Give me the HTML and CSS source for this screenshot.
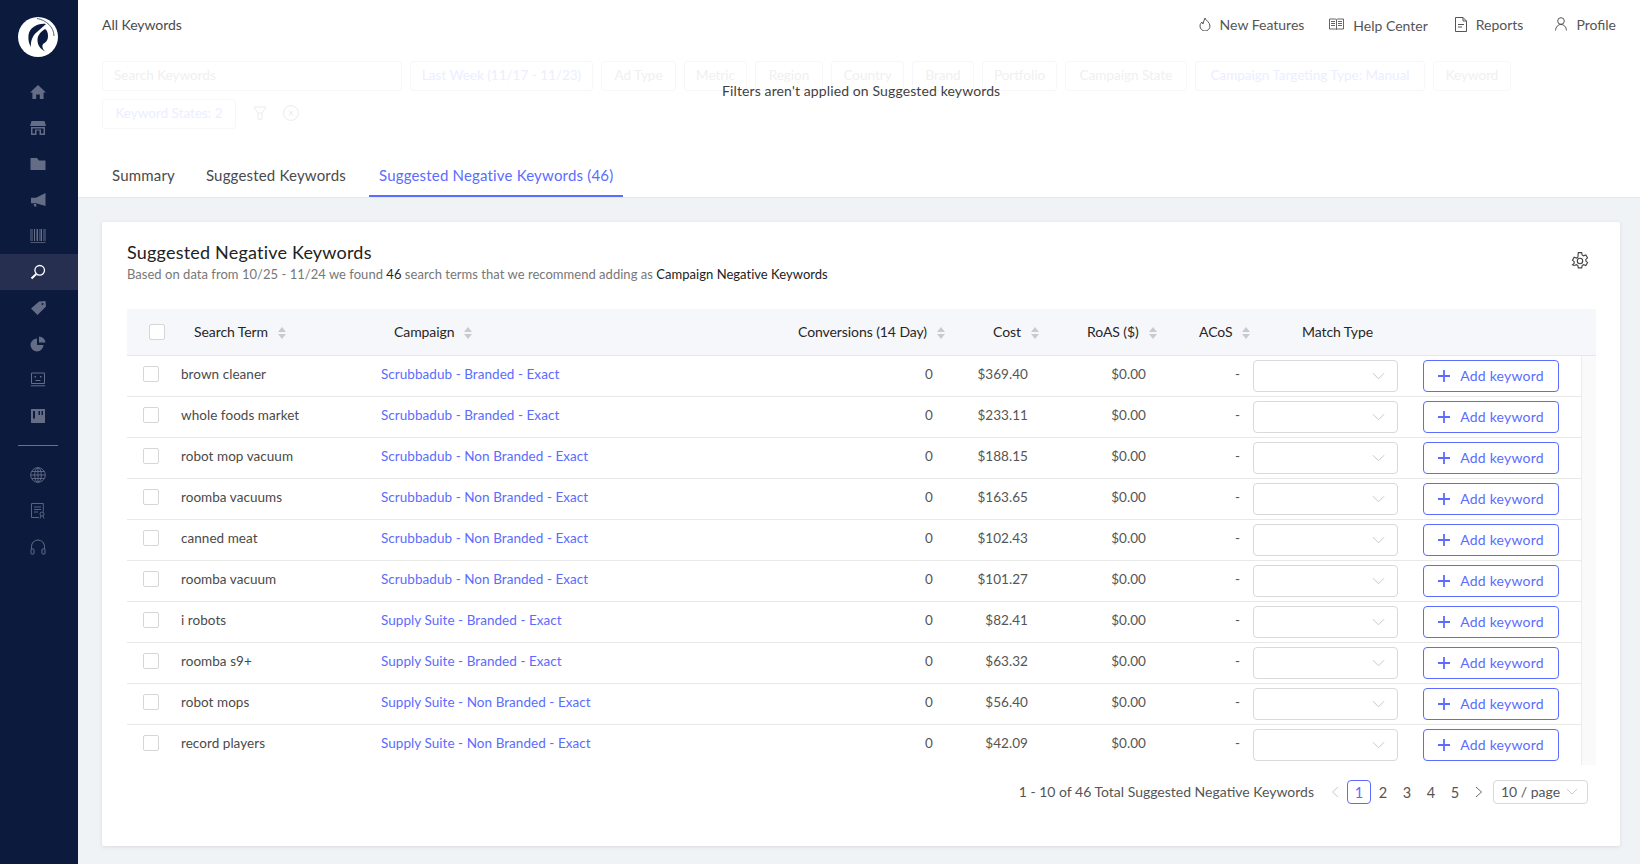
FILE: index.html
```html
<!DOCTYPE html>
<html lang="en">
<head>
<meta charset="utf-8">
<title>All Keywords</title>
<link rel="stylesheet" href="styles.css">
</head>
<body>
<svg class="defs" width="0" height="0">
  <symbol id="chev" viewBox="0 0 14 8"><path d="M1 1l6 6 6-6" fill="none" stroke="currentColor" stroke-width="1"/></symbol>
  <symbol id="plus" viewBox="0 0 12 12"><path d="M6 0v12M0 6h12" fill="none" stroke="currentColor" stroke-width="1.8"/></symbol>
  <symbol id="sort" viewBox="0 0 8 12"><path d="M4 0l4 5H0zM4 12l4-5H0z" fill="currentColor"/></symbol>
</svg>
<div class="app">
  <nav class="side">
    <svg class="logo" viewBox="0 0 40 40"><circle cx="20" cy="20" r="20" fill="#fff"/><path d="M19 1.500C28 3 36 10 36 19" fill="none" stroke="#0c1a3e" stroke-width=".7"/><path d="M28 7C20 6 12 10 10.500 18c-.5 5 .5 9 2.500 12-.5-5 1-11 6-15 3-3 6-5 9-8zM27 12c-5 3-7.500 7-7.500 11 0 5 2.500 9 8.500 12-3-2-4.500-5.500-3-8 2-1 5-3 5-8 0-3-1-6-3-7z" fill="#0c1a3e"/></svg>
    <ul class="nav">
      <li><svg viewBox="0 0 16 16"><path d="M8 1L0 8.500h2.400V15h3.800v-4.400h3.600V15h3.800V8.500H16z" fill="currentColor"/></svg></li>
      <li><svg viewBox="0 0 16 16"><path d="M1.500 1h13L16 6H0zM1 7h14v8H9.500v-4.500h-3V15H1zM2.500 8.500v5h2.500V9.500h6v4h2.500v-5z" fill="currentColor" fill-rule="evenodd"/></svg></li>
      <li><svg viewBox="0 0 16 16"><path d="M.5 2h6.500l2 2.500h6.500V14H.5z" fill="currentColor"/></svg></li>
      <li><svg viewBox="0 0 16 16"><path d="M15.500 1v13L6 11.200H1V5.800h5zM3.500 12h2.500l.7 2.500H4.300z" fill="currentColor"/></svg></li>
      <li><svg viewBox="0 0 16 16"><path d="M.5 1h1v12h-1zM2.500 1h.5v12h-.5zM4 1h1v12H4zM6.500 1h1.500v12H6.500zM9 1h.5v12H9zM10.500 1h1.500v12h-1.500zM13 1h.5v12H13zM14.500 1h1v12h-1zM.5 14h15v.7H.5z" fill="currentColor"/></svg></li>
      <li class="on"><svg viewBox="0 0 16 16"><circle cx="9.700" cy="6.300" r="4.800" fill="none" stroke="currentColor" stroke-width="1.300"/><path d="M6.200 10L1.500 14.500" stroke="currentColor" stroke-width="2"/></svg></li>
      <li><svg viewBox="0 0 16 16"><path d="M9 1.500l6.500-.5.500 5.500L7.500 15 1 8.500zM12.500 3a1 1 0 100 2 1 1 0 000-2z" fill="currentColor" fill-rule="evenodd"/></svg></li>
      <li><svg viewBox="0 0 16 16"><path d="M7 2.500a6.500 6.500 0 106.500 6.500H7zM9 .5v6h6.500A6.500 6.500 0 009 .5z" fill="currentColor"/></svg></li>
      <li><svg viewBox="0 0 16 16"><path d="M1.500 1h13v10.500h-13zM.9 13.800h14.200" fill="none" stroke="currentColor" stroke-width="1"/><path d="M4.500 4h1.500v1.500H4.500zM10 4h1.500v1.500H10zM5.500 8h5v1h-5z" fill="currentColor"/></svg></li>
      <li><svg viewBox="0 0 16 16"><path d="M1 1h14v14H1zM3 3v7.500h2V3zM8.500 3v4h1.500V3zM11.500 3v4H13V3z" fill="currentColor" fill-rule="evenodd"/></svg></li>
    </ul>
    <hr class="rule">
    <ul class="nav nav-b">
      <li><svg viewBox="0 0 16 16" fill="none" stroke="currentColor" stroke-width=".9"><circle cx="8" cy="8" r="7.300"/><ellipse cx="8" cy="8" rx="3.300" ry="7.300"/><path d="M8 .7v14.600M.7 8h14.600M1.700 4.500h12.600M1.700 11.500h12.600"/></svg></li>
      <li><svg viewBox="0 0 16 16" fill="none" stroke="currentColor" stroke-width=".9"><path d="M9 14.500H1.500V.5h11.800v8"/><path d="M4 4h7M4 6.500h7M4 9h4"/><circle cx="12" cy="11" r="2"/><path d="M10 15.500l1-2.500M14 15.500l-1-2.500"/></svg></li>
      <li><svg viewBox="0 0 16 16" fill="none" stroke="currentColor" stroke-width="1"><path d="M1.500 10V7.500a6.500 6.500 0 0113 0V10"/><rect x="1" y="10" width="3" height="5" rx=".6"/><rect x="12" y="10" width="3" height="5" rx=".6"/></svg></li>
    </ul>
  </nav>
  <main class="main">
    <header class="top">
      <span class="crumb">All Keywords</span>
      <div class="links">
        <a class="link l1"><svg viewBox="0 0 12 14" fill="none" stroke="currentColor"><path d="M6 1c.5 2.500 5 4 5 8a5 5 0 01-10 0c0-2 1-3 2-4 0 1 .5 1.500 1 2C4.500 5 5 3 6 1z"/></svg>New Features</a>
        <a class="link l2"><svg viewBox="0 0 15 12" fill="none" stroke="currentColor" stroke-width=".9"><path d="M.5 1h6l1 .6 1-.6h6v10h-6l-1 .6-1-.6h-6zM7.500 1.600v9.800M2 3.500h4M2 5.500h4M2 7.500h4M9 3.500h4M9 5.500h4M9 7.500h4"/></svg><span class="low">Help Center</span></a>
        <a class="link l3"><svg viewBox="0 0 12 15" fill="none" stroke="currentColor"><path d="M.5.500h7.500l3.500 3.500v10.500H.5zM8 .5V4h3.500M3 7.500h6M3 10h4"/></svg>Reports</a>
        <a class="link l4"><svg viewBox="0 0 12 14" fill="none" stroke="currentColor"><circle cx="6" cy="4" r="3.300"/><path d="M.6 13.500c0-3.500 2.400-6 5.400-6s5.400 2.500 5.400 6"/></svg>Profile</a>
      </div>
    </header>
    <section class="filters">
      <div class="chips">
        <span class="chip search">Search Keywords</span>
        <span class="chip blue w-week">Last Week (11/17 - 11/23)</span>
        <span class="chip w-ad">Ad Type</span>
        <span class="chip w-metric">Metric</span>
        <span class="chip w-region">Region</span>
        <span class="chip w-country">Country</span>
        <span class="chip w-brand">Brand</span>
        <span class="chip w-port">Portfolio</span>
        <span class="chip w-state">Campaign State</span>
        <span class="chip blue w-target">Campaign Targeting Type: Manual</span>
        <span class="chip w-kw">Keyword</span>
      </div>
      <div class="chips">
        <span class="chip blue w-states">Keyword States: 2</span>
        <svg class="fa" viewBox="0 0 14 14" fill="none" stroke="currentColor"><path d="M.8 1h12.400L9 7v6.200H5V7zM5 7h4"/></svg>
        <svg class="fb" viewBox="0 0 16 16" fill="none" stroke="currentColor"><circle cx="8" cy="8" r="7.400"/><path d="M5.800 5.500l4.400 5M10.200 5.500l-4.400 5"/></svg>
      </div>
      <p class="notice">Filters aren't applied on Suggested keywords</p>
    </section>
    <div class="tabs">
      <a class="tab">Summary</a>
      <a class="tab">Suggested Keywords</a>
      <a class="tab active">Suggested Negative Keywords (46)</a>
    </div>
    <section class="card">
      <div class="card-head">
        <div>
          <h1>Suggested Negative Keywords</h1>
          <p>Based on data from 10/25 - 11/24 we found <b>46</b> search terms that we recommend adding as <b>Campaign Negative Keywords</b></p>
        </div>
        <svg class="gear" viewBox="0 0 16 16" fill="none" stroke="currentColor" stroke-width="1"><path d="M6.500.8h3l.4 2 1.300.8 2-.7 1.500 2.600-1.500 1.300v1.500l1.500 1.300-1.500 2.600-2-.7-1.300.8-.4 2h-3l-.4-2-1.300-.8-2 .7L1.300 11.600l1.500-1.300V8.800L1.300 7.500l1.500-2.600 0 0 2 .7 1.300-.8z" transform="translate(0 -.2)"/><circle cx="8" cy="8" r="2.400"/></svg>
      </div>
      <div class="thead">
        <span class="cb hcb"></span>
        <span class="th t1">Search Term<svg class="sort"><use href="#sort"/></svg></span>
        <span class="th t2">Campaign<svg class="sort"><use href="#sort"/></svg></span>
        <span class="th t3">Conversions (14 Day)<svg class="sort"><use href="#sort"/></svg></span>
        <span class="th t4">Cost<svg class="sort"><use href="#sort"/></svg></span>
        <span class="th t5">RoAS ($)<svg class="sort"><use href="#sort"/></svg></span>
        <span class="th t6">ACoS<svg class="sort"><use href="#sort"/></svg></span>
        <span class="th t7">Match Type</span>
      </div>
      <div class="tbody">
        <div class="rows">
          <div class="row"><span class="cb"></span><span class="txt">brown cleaner</span><a class="txt">Scrubbadub - Branded - Exact</a><span class="txt num">0</span><span class="txt num">$369.40</span><span class="txt num">$0.00</span><span class="txt num">-</span><span class="sel"><svg><use href="#chev"/></svg></span><button class="add"><svg><use href="#plus"/></svg>Add keyword</button></div>
          <div class="row"><span class="cb"></span><span class="txt">whole foods market</span><a class="txt">Scrubbadub - Branded - Exact</a><span class="txt num">0</span><span class="txt num">$233.11</span><span class="txt num">$0.00</span><span class="txt num">-</span><span class="sel"><svg><use href="#chev"/></svg></span><button class="add"><svg><use href="#plus"/></svg>Add keyword</button></div>
          <div class="row"><span class="cb"></span><span class="txt">robot mop vacuum</span><a class="txt">Scrubbadub - Non Branded - Exact</a><span class="txt num">0</span><span class="txt num">$188.15</span><span class="txt num">$0.00</span><span class="txt num">-</span><span class="sel"><svg><use href="#chev"/></svg></span><button class="add"><svg><use href="#plus"/></svg>Add keyword</button></div>
          <div class="row"><span class="cb"></span><span class="txt">roomba vacuums</span><a class="txt">Scrubbadub - Non Branded - Exact</a><span class="txt num">0</span><span class="txt num">$163.65</span><span class="txt num">$0.00</span><span class="txt num">-</span><span class="sel"><svg><use href="#chev"/></svg></span><button class="add"><svg><use href="#plus"/></svg>Add keyword</button></div>
          <div class="row"><span class="cb"></span><span class="txt">canned meat</span><a class="txt">Scrubbadub - Non Branded - Exact</a><span class="txt num">0</span><span class="txt num">$102.43</span><span class="txt num">$0.00</span><span class="txt num">-</span><span class="sel"><svg><use href="#chev"/></svg></span><button class="add"><svg><use href="#plus"/></svg>Add keyword</button></div>
          <div class="row"><span class="cb"></span><span class="txt">roomba vacuum</span><a class="txt">Scrubbadub - Non Branded - Exact</a><span class="txt num">0</span><span class="txt num">$101.27</span><span class="txt num">$0.00</span><span class="txt num">-</span><span class="sel"><svg><use href="#chev"/></svg></span><button class="add"><svg><use href="#plus"/></svg>Add keyword</button></div>
          <div class="row"><span class="cb"></span><span class="txt">i robots</span><a class="txt">Supply Suite - Branded - Exact</a><span class="txt num">0</span><span class="txt num">$82.41</span><span class="txt num">$0.00</span><span class="txt num">-</span><span class="sel"><svg><use href="#chev"/></svg></span><button class="add"><svg><use href="#plus"/></svg>Add keyword</button></div>
          <div class="row"><span class="cb"></span><span class="txt">roomba s9+</span><a class="txt">Supply Suite - Branded - Exact</a><span class="txt num">0</span><span class="txt num">$63.32</span><span class="txt num">$0.00</span><span class="txt num">-</span><span class="sel"><svg><use href="#chev"/></svg></span><button class="add"><svg><use href="#plus"/></svg>Add keyword</button></div>
          <div class="row"><span class="cb"></span><span class="txt">robot mops</span><a class="txt">Supply Suite - Non Branded - Exact</a><span class="txt num">0</span><span class="txt num">$56.40</span><span class="txt num">$0.00</span><span class="txt num">-</span><span class="sel"><svg><use href="#chev"/></svg></span><button class="add"><svg><use href="#plus"/></svg>Add keyword</button></div>
          <div class="row"><span class="cb"></span><span class="txt">record players</span><a class="txt">Supply Suite - Non Branded - Exact</a><span class="txt num">0</span><span class="txt num">$42.09</span><span class="txt num">$0.00</span><span class="txt num">-</span><span class="sel"><svg><use href="#chev"/></svg></span><button class="add"><svg><use href="#plus"/></svg>Add keyword</button></div>
        </div>
        <div class="scroll"></div>
      </div>
      <div class="pager">
        <span class="total">1 - 10 of 46 Total Suggested Negative Keywords</span>
        <svg class="pg-arrow prev" viewBox="0 0 8 12" fill="none" stroke="currentColor"><path d="M7 1L1.500 6 7 11"/></svg>
        <span class="pg cur">1</span><span class="pg">2</span><span class="pg">3</span><span class="pg">4</span><span class="pg">5</span>
        <svg class="pg-arrow next" viewBox="0 0 8 12" fill="none" stroke="currentColor"><path d="M1 1l5.500 5L1 11"/></svg>
        <span class="size">10 / page<svg><use href="#chev"/></svg></span>
      </div>
    </section>
  </main>
</div>
</body>
</html>
```

FILE: styles.css
```css
* { box-sizing: border-box; }
html, body { margin: 0; height: 864px; overflow: hidden; }
body { font-family: Lato, "Liberation Sans", sans-serif; font-size: 14px; color: #4a4a4a; background: #f0f3f6; }
.defs { position: absolute; }
ul { list-style: none; margin: 0; padding: 0; }
p, h1 { margin: 0; }
a { display: inline-block; }

.app { display: flex; height: 864px; }
.side { width: 78px; flex: none; background: #0c1a3e; padding-top: 17px; display: flex; flex-direction: column; align-items: center; }
.logo { width: 40px; height: 40px; flex: none; margin-right: 3px; }
.nav { width: 100%; margin-top: 17px; }
.nav li { height: 36px; display: flex; align-items: center; justify-content: center; color: #646c86; padding-right: 3px; }
.nav li svg { width: 16px; height: 16px; }
.nav li.on { background: #262f50; color: #fff; }
.rule { width: 40px; height: 1px; border: 0; margin: 11px 3px 11px 0; background: #6a7189; }
.nav-b { margin-top: 0; }
.nav-b li { height: 36px; }

.main { flex: 1; min-width: 0; display: flex; flex-direction: column; }
.top { height: 50px; background: #fff; display: flex; align-items: center; justify-content: space-between; padding: 0 24px 2px 24px; flex: none; }
.crumb { font-size: 14px; letter-spacing: -.05px; }
.links { display: flex; }
.link { display: flex; align-items: center; color: #555; font-size: 14px; letter-spacing: 0; }
.link svg { margin-right: 9px; flex: none; }
.low { position: relative; top: 1px; }
.l1 svg { width: 12px; height: 14px; }
.l2 { margin-left: 25px; }
.l2 svg { width: 15px; height: 12px; }
.l3 { margin-left: 27px; }
.l3 svg { width: 12px; height: 15px; }
.l4 { margin-left: 32px; }
.l4 svg { width: 12px; height: 14px; }

.filters { position: relative; height: 99px; background: #fff; padding: 11px 0 0 24px; flex: none; }
.chips { display: flex; align-items: center; gap: 8px; height: 30px; margin-bottom: 8px; }
.chip { height: 30px; display: flex; align-items: center; justify-content: center; border: 1px solid #f7f7f9; border-radius: 3px; color: #eff0f2; font-size: 13.500px; flex: none; padding-bottom: 2px; }
.chip.blue { color: #eceeff; }
.search { width: 300px; justify-content: flex-start; padding-left: 11px; }
.w-week { width: 183px; } .w-ad { width: 75px; } .w-metric { width: 63px; } .w-region { width: 68px; }
.w-country { width: 73px; } .w-brand { width: 62px; } .w-port { width: 75px; } .w-state { width: 122px; }
.w-target { width: 230px; } .w-kw { width: 78px; } .w-states { width: 134px; }
.fa { width: 14px; height: 14px; color: #eaebee; margin-left: 9px; margin-bottom: 2px; }
.fb { width: 16px; height: 16px; color: #eaebee; margin-left: 8px; margin-bottom: 2px; }
.notice { position: absolute; left: 644px; top: 32px; color: #3f3f3f; font-size: 14px; letter-spacing: .12px; }

.tabs { height: 49px; background: #fff; border-bottom: 1px solid #e6e8eb; display: flex; padding-left: 24px; flex: none; }
.tab { height: 48px; padding: 16px 10px 0; margin-right: 13px; font-size: 15px; color: #4a4a4a; line-height: 20px; letter-spacing: .18px; }
.tab:first-child { margin-right: 11px; }
.tab.active { color: #5b6cff; border-bottom: 2px solid #5b6cff; }

.card { margin: 24px 20px 18px 24px; background: #fff; height: 624px; border-radius: 2px; box-shadow: 0 1px 4px rgba(40, 50, 70, .12); padding: 0 24px 0 25px; flex: none; }
.card-head { height: 87px; display: flex; justify-content: space-between; padding-top: 20px; position: relative; }
.card h1 { font-size: 18px; font-weight: 400; color: #222; line-height: 20px; letter-spacing: .2px; }
.card-head p { margin-top: 3px; font-size: 13px; color: #777; line-height: 18px; letter-spacing: .03px; }
.card-head b { color: #222; font-weight: 400; }
.gear { width: 18px; height: 18px; color: #444; margin: 10px 7px 0 0; flex: none; }

.thead { height: 47px; background: #f6f7fb; border-bottom: 1px solid #e5e7ea; position: relative; display: grid; grid-template-columns: 67px 200px 404px 195px 94px 112px 103px 1fr; align-items: center; }
.th { color: #262626; font-size: 14px; display: flex; align-items: center; letter-spacing: -.08px; padding-bottom: 1px; }
.t1 { grid-column: 2; } .t2 { grid-column: 3; } .t3 { grid-column: 4; } .t4 { grid-column: 5; } .t5 { grid-column: 6; } .t6 { grid-column: 7; } .t7 { grid-column: 8; }
.sort { width: 8px; height: 12px; margin-left: 10px; margin-top: 2px; color: #c8cacf; flex: none; }
.cb { width: 16px; height: 16px; background: #fff; border: 1px solid #d6d6d6; border-radius: 2px; display: block; }
.hcb { position: absolute; left: 22px; top: 15px; }

.tbody { height: 409px; overflow: hidden; display: flex; }
.rows { width: 1454px; flex: none; }
.row { height: 41px; border-bottom: 1px solid #e8e8e8; display: grid; grid-template-columns: 54px 200px 350px 202px 95px 118px 94px 183px 136px; align-items: center; font-size: 13.500px; letter-spacing: .05px; }
.row .cb { margin-left: 16px; margin-top: -4px; }
.txt { margin-bottom: 4px; }
.row a { color: #5b6cff; font-weight: 400; }
.num { text-align: right; color: #555; }
.sel { width: 145px; height: 32px; margin-left: 13px; border: 1px solid #d9d9d9; border-radius: 4px; display: flex; align-items: center; justify-content: flex-end; padding-right: 12px; color: #c4c4c4; }
.sel svg { width: 13px; height: 8px; }
.add { width: 136px; height: 32px; background: #fff; border: 1px solid #5b6cff; border-radius: 4px; color: #5b6cff; font: inherit; font-size: 14px; letter-spacing: .2px; display: flex; align-items: center; justify-content: center; padding: 0 0 1px; }
.add svg { width: 12px; height: 12px; margin-right: 10px; }
.scroll { width: 15px; background: #fafafa; border-left: 1px solid #ececec; }

.pager { display: flex; align-items: center; height: 24px; margin-top: 15px; justify-content: flex-end; padding-right: 8px; font-size: 14px; color: #555; }
.total { margin-right: 17px; padding-bottom: 1px; }
.pg-arrow { width: 8px; height: 12px; }
.prev { color: #c9c9c9; margin-right: 8px; }
.next { color: #666; margin-left: 8px; margin-right: 10px; }
.pg { width: 24px; height: 24px; display: flex; align-items: center; justify-content: center; font-size: 14.500px; }
.cur { color: #5b6cff; border: 1px solid #5b6cff; border-radius: 4px; }
.size { width: 95px; height: 24px; border: 1px solid #d9d9d9; border-radius: 4px; display: flex; align-items: center; justify-content: space-between; padding: 0 9px 1px 7px; }
.size svg { width: 12px; height: 7px; color: #c4c4c4; }
```
